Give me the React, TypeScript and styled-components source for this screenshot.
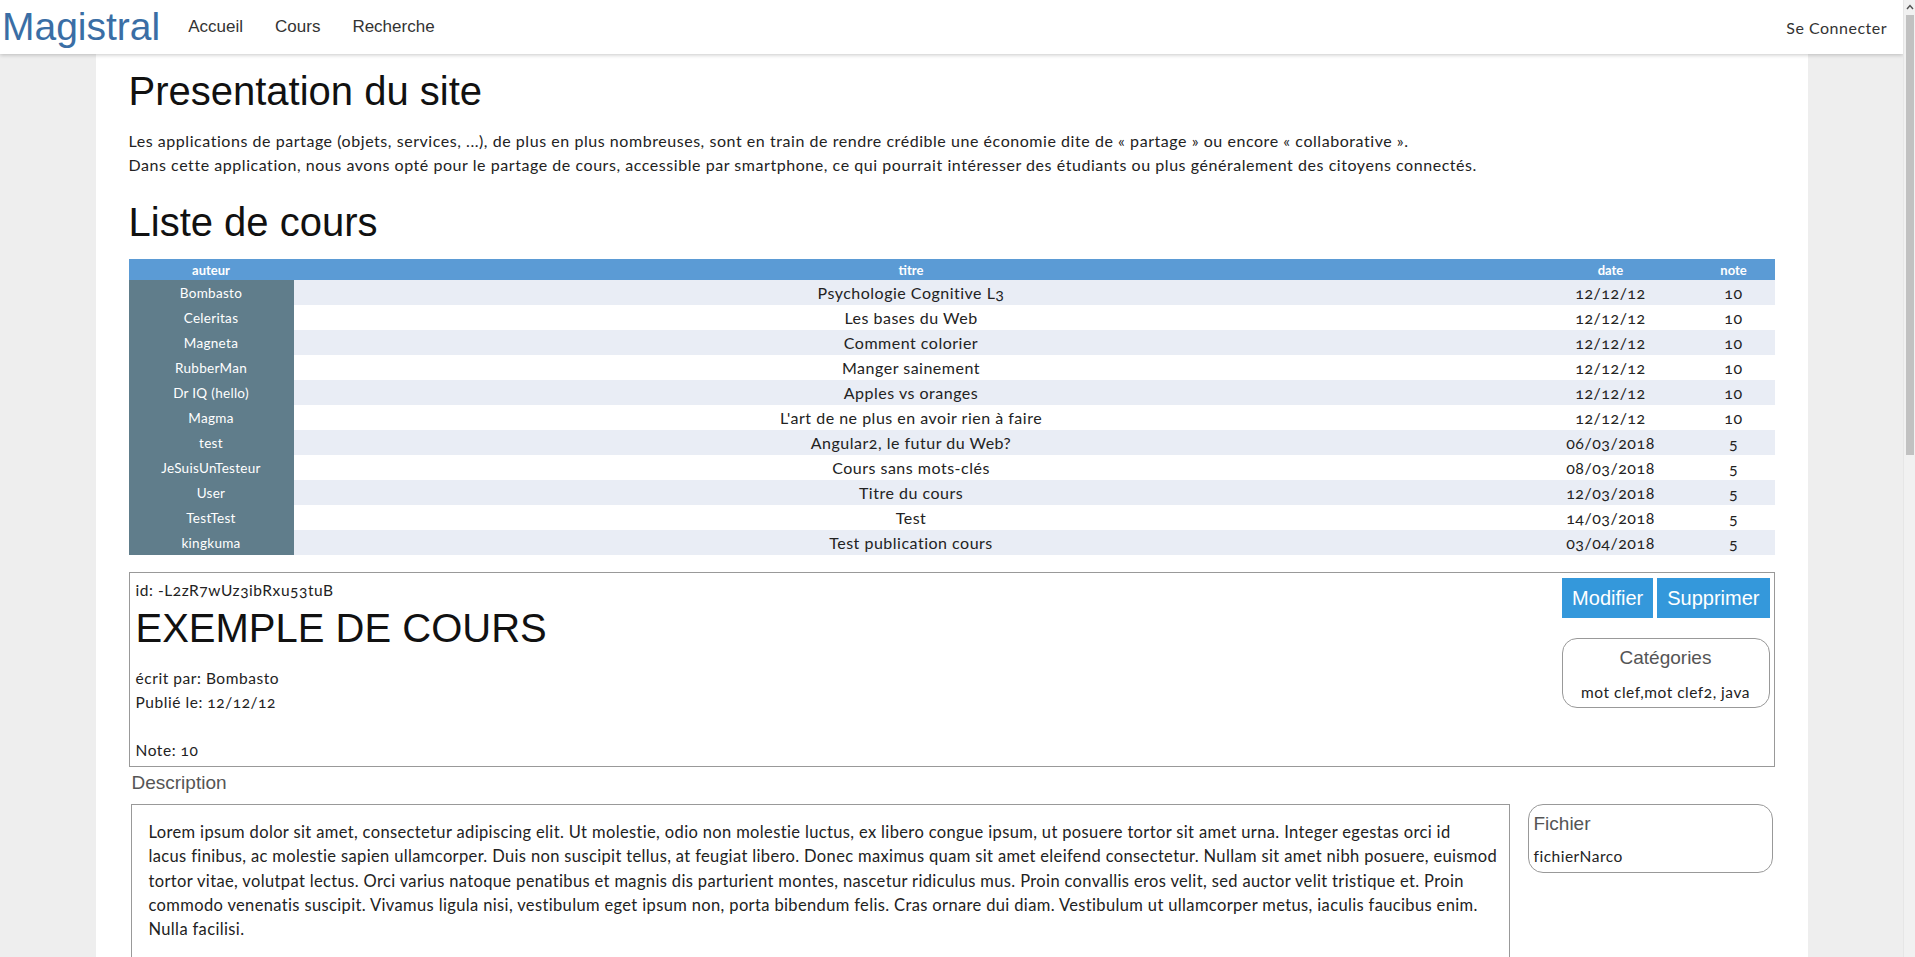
import React from "react";
import styled, { createGlobalStyle } from "styled-components";

const GlobalStyle = createGlobalStyle`
  html, body { margin: 0; padding: 0; }
  body {
    background: #eeeeee;
    font-family: Lato, "Open Sans", sans-serif;
    font-variant-numeric: oldstyle-nums;
    color: #222;
  }
  * { box-sizing: border-box; }
`;

const Viewport = styled.div`
  margin-right: 12px;
`;

const ScrollTrack = styled.div`
  position: fixed;
  top: 0;
  right: 0;
  width: 12px;
  height: 100vh;
  background: #f1f1f1;
  border-left: 1px solid #e6e6e6;
  display: flex;
  flex-direction: column;
  align-items: center;
  z-index: 5;
`;

const ScrollArrow = styled.svg`
  margin-top: 4px;
  flex: none;
`;

const ScrollThumb = styled.div`
  margin-top: 5px;
  width: 8px;
  height: 440px;
  background: #c1c1c1;
`;

const NavBar = styled.header`
  height: 54px;
  background: #fff;
  box-shadow: 0 1px 4px rgba(0, 0, 0, 0.22);
  display: flex;
  align-items: center;
  padding: 0 16px 0 2px;
  position: relative;
  z-index: 1;
`;

const Brand = styled.a`
  font-family: "Liberation Sans", Arial, sans-serif;
  font-size: 39px;
  line-height: 54px;
  color: #3a6ea5;
  text-decoration: none;
  margin-right: 12px;
`;

const NavLink = styled.a`
  font-family: "Liberation Sans", Arial, sans-serif;
  font-size: 17px;
  line-height: 54px;
  color: #333;
  padding: 0 16px;
  text-decoration: none;
`;

const Spacer = styled.div`
  flex: 1;
`;

const LoginLink = styled.a`
  font-size: 16px;
  letter-spacing: 0.5px;
  color: #333;
  text-decoration: none;
`;

const Page = styled.main`
  width: 1712px;
  margin: 0 auto;
  background: #fff;
  padding: 15px 33px 40px;
`;

const Heading = styled.h1<{ $top?: number }>`
  font-family: "Liberation Sans", Arial, sans-serif;
  font-weight: normal;
  font-size: 40px;
  line-height: 44px;
  margin: ${(p) => p.$top ?? 0}px 0 0;
  color: #111;
`;

const Intro = styled.p`
  margin: 16px 0 0;
  font-size: 16px;
  letter-spacing: 0.55px;
  line-height: 24px;
  color: #222;
`;

const Table = styled.table`
  width: 100%;
  margin-top: 15px;
  border-collapse: collapse;
  table-layout: fixed;
`;

const Th = styled.th<{ $w?: string }>`
  width: ${(p) => p.$w ?? "auto"};
  background: #5b9bd5;
  color: #fff;
  font-size: 13px;
  font-weight: 700;
  height: 21px;
  padding: 0;
  text-align: center;
`;

const Row = styled.tr<{ $alt: boolean }>`
  background: ${(p) => (p.$alt ? "#e9edf5" : "#ffffff")};
`;

const Td = styled.td`
  height: 25px;
  padding: 0;
  text-align: center;
  font-size: 16px;
  letter-spacing: 0.5px;
  color: #222;
`;

const AuthorTd = styled(Td)`
  background: #607d8b;
  color: #fff;
  font-size: 13.5px;
  letter-spacing: 0.3px;
`;

const Card = styled.section`
  margin-top: 17px;
  border: 1px solid #999;
  display: flex;
  justify-content: space-between;
  padding: 5px 4px 4px 6px;
`;

const CardInfo = styled.div`
  display: flex;
  flex-direction: column;
  font-size: 15.5px;
  letter-spacing: 0.55px;
  line-height: 24px;
`;

const InfoLine = styled.div<{ $gap?: number }>`
  margin-top: ${(p) => p.$gap ?? 0}px;
`;

const CourseTitle = styled.h2`
  font-family: "Liberation Sans", Arial, sans-serif;
  font-weight: normal;
  font-size: 40px;
  line-height: 44px;
  letter-spacing: 0;
  margin: 4px 0 16px;
  color: #111;
`;

const CardSide = styled.div`
  display: flex;
  flex-direction: column;
  align-items: flex-end;
`;

const ButtonRow = styled.div`
  display: flex;
  gap: 4px;
`;

const ActionButton = styled.button`
  font-family: "Liberation Sans", Arial, sans-serif;
  font-size: 20px;
  height: 40px;
  padding: 0 10px;
  border: none;
  background: #3498db;
  color: #fff;
  cursor: pointer;
`;

const RoundBox = styled.div<{ $align: "center" | "left" }>`
  border: 1px solid #999;
  border-radius: 15px;
  text-align: ${(p) => p.$align};
`;

const CategoryBox = styled(RoundBox)`
  margin-top: 20px;
  width: 208px;
  height: 70px;
  padding-top: 5px;
`;

const BoxTitle = styled.div`
  font-family: "Liberation Sans", Arial, sans-serif;
  font-size: 19px;
  line-height: 28px;
  color: #555;
`;

const BoxText = styled.div<{ $gap: number }>`
  margin-top: ${(p) => p.$gap}px;
  font-size: 15.5px;
  letter-spacing: 0.5px;
  line-height: 24px;
  color: #222;
`;

const Label = styled.div`
  font-family: "Liberation Sans", Arial, sans-serif;
  font-size: 19px;
  line-height: 24px;
  color: #555;
  margin: 4px 0 0 3px;
`;

const DescRow = styled.div`
  display: flex;
  gap: 18px;
  margin: 9px 2px 0;
  align-items: flex-start;
`;

const DescBox = styled.div`
  flex: 1;
  min-width: 0;
  border: 1px solid #999;
  padding: 15px 2px 40px 17px;
  font-size: 16.5px;
  letter-spacing: 0.36px;
  line-height: 24.3px;
  color: #222;
`;

const DescLine = styled.div`
  white-space: nowrap;
`;

const FileBox = styled(RoundBox)`
  width: 245px;
  height: 69px;
  padding: 5px 5px 0;
`;

const courses = [
  ["Bombasto", "Psychologie Cognitive L3", "12/12/12", "10"],
  ["Celeritas", "Les bases du Web", "12/12/12", "10"],
  ["Magneta", "Comment colorier", "12/12/12", "10"],
  ["RubberMan", "Manger sainement", "12/12/12", "10"],
  ["Dr IQ (hello)", "Apples vs oranges", "12/12/12", "10"],
  ["Magma", "L'art de ne plus en avoir rien à faire", "12/12/12", "10"],
  ["test", "Angular2, le futur du Web?", "06/03/2018", "5"],
  ["JeSuisUnTesteur", "Cours sans mots-clés", "08/03/2018", "5"],
  ["User", "Titre du cours", "12/03/2018", "5"],
  ["TestTest", "Test", "14/03/2018", "5"],
  ["kingkuma", "Test publication cours", "03/04/2018", "5"],
];

const descriptionLines = [
  "Lorem ipsum dolor sit amet, consectetur adipiscing elit. Ut molestie, odio non molestie luctus, ex libero congue ipsum, ut posuere tortor sit amet urna. Integer egestas orci id",
  "lacus finibus, ac molestie sapien ullamcorper. Duis non suscipit tellus, at feugiat libero. Donec maximus quam sit amet eleifend consectetur. Nullam sit amet nibh posuere, euismod",
  "tortor vitae, volutpat lectus. Orci varius natoque penatibus et magnis dis parturient montes, nascetur ridiculus mus. Proin convallis eros velit, sed auctor velit tristique et. Proin",
  "commodo venenatis suscipit. Vivamus ligula nisi, vestibulum eget ipsum non, porta bibendum felis. Cras ornare dui diam. Vestibulum ut ullamcorper metus, iaculis faucibus enim.",
  "Nulla facilisi.",
];

export default function App() {
  return (
    <>
      <GlobalStyle />
      <ScrollTrack>
        <ScrollArrow width="8" height="6" viewBox="0 0 8 6">
          <path d="M1 5 L4 1.5 L7 5" fill="none" stroke="#505050" strokeWidth="1.4" />
        </ScrollArrow>
        <ScrollThumb />
      </ScrollTrack>
      <Viewport>
        <NavBar>
          <Brand href="#">Magistral</Brand>
          <NavLink href="#">Accueil</NavLink>
          <NavLink href="#">Cours</NavLink>
          <NavLink href="#">Recherche</NavLink>
          <Spacer />
          <LoginLink href="#">Se Connecter</LoginLink>
        </NavBar>
        <Page>
          <Heading>Presentation du site</Heading>
          <Intro>
            Les applications de partage (objets, services, ...), de plus en plus nombreuses, sont en train de rendre
            crédible une économie dite de « partage » ou encore « collaborative ».
            <br />
            Dans cette application, nous avons opté pour le partage de cours, accessible par smartphone, ce qui
            pourrait intéresser des étudiants ou plus généralement des citoyens connectés.
          </Intro>
          <Heading $top={23}>Liste de cours</Heading>
          <Table>
            <thead>
              <tr>
                <Th $w="165px">auteur</Th>
                <Th>titre</Th>
                <Th $w="164px">date</Th>
                <Th $w="82px">note</Th>
              </tr>
            </thead>
            <tbody>
              {courses.map((c, i) => (
                <Row key={i} $alt={i % 2 === 0}>
                  <AuthorTd>{c[0]}</AuthorTd>
                  <Td>{c[1]}</Td>
                  <Td>{c[2]}</Td>
                  <Td>{c[3]}</Td>
                </Row>
              ))}
            </tbody>
          </Table>
          <Card>
            <CardInfo>
              <InfoLine>id: -L2zR7wUz3ibRxu53tuB</InfoLine>
              <CourseTitle>EXEMPLE DE COURS</CourseTitle>
              <InfoLine>écrit par: Bombasto</InfoLine>
              <InfoLine>Publié le: 12/12/12</InfoLine>
              <InfoLine $gap={24}>Note: 10</InfoLine>
            </CardInfo>
            <CardSide>
              <ButtonRow>
                <ActionButton>Modifier</ActionButton>
                <ActionButton>Supprimer</ActionButton>
              </ButtonRow>
              <CategoryBox $align="center">
                <BoxTitle>Catégories</BoxTitle>
                <BoxText $gap={8}>mot clef,mot clef2, java</BoxText>
              </CategoryBox>
            </CardSide>
          </Card>
          <Label>Description</Label>
          <DescRow>
            <DescBox>
              {descriptionLines.map((line, i) => (
                <DescLine key={i}>{line}</DescLine>
              ))}
            </DescBox>
            <FileBox $align="left">
              <BoxTitle>Fichier</BoxTitle>
              <BoxText $gap={6}>fichierNarco</BoxText>
            </FileBox>
          </DescRow>
        </Page>
      </Viewport>
    </>
  );
}
